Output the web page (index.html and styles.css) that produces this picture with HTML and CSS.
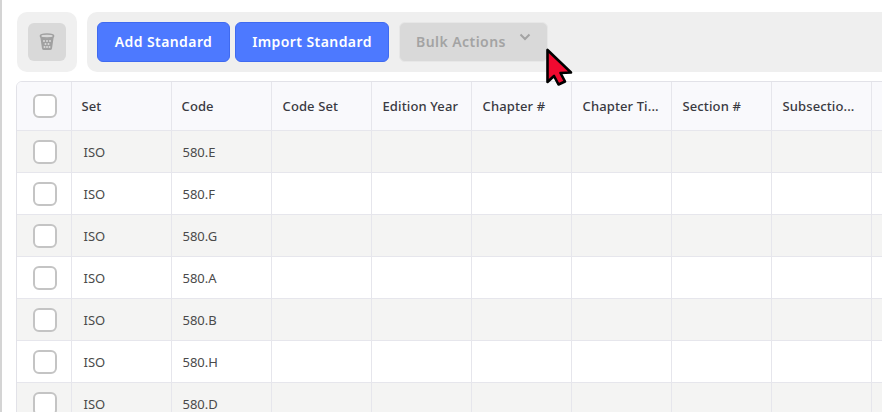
FILE: index.html
```html
<!DOCTYPE html>
<html lang="en">
<head>
<meta charset="utf-8">
<title>Standards</title>
<link rel="stylesheet" href="styles.css">
</head>
<body>
<div class="page">
  <div class="toolbar">
    <div class="trash-box">
      <button class="trash-btn" aria-label="Delete">
        <svg width="16" height="18" viewBox="0 0 16 18">
          <ellipse cx="8" cy="3" rx="6.6" ry="2" fill="none" stroke="#a0a0a0" stroke-width="1.6"/>
          <path d="M1.3 4 L3 15.5 Q3.3 17 5 17 H11 Q12.7 17 13 15.5 L14.7 4 Q8 6.5 1.3 4Z" fill="#a0a0a0"/>
          <g fill="#d8d8d8">
            <circle cx="5" cy="8" r="1"/><circle cx="8" cy="8" r="1"/><circle cx="11" cy="8" r="1"/>
            <circle cx="6.5" cy="11" r="1"/><circle cx="9.5" cy="11" r="1"/>
            <circle cx="5.5" cy="14" r="1"/><circle cx="8" cy="14" r="1"/><circle cx="10.5" cy="14" r="1"/>
          </g>
        </svg>
      </button>
    </div>
    <div class="actions">
      <button class="btn btn-primary btn-add">Add Standard</button>
      <button class="btn btn-primary btn-import">Import Standard</button>
      <button class="btn btn-bulk">Bulk Actions
        <svg class="chev" width="12" height="8" viewBox="0 0 12 8"><path d="M1.5 1.5 L6 6 L10.5 1.5" fill="none" stroke="#a3a3a3" stroke-width="2"/></svg>
      </button>
    </div>
  </div>
  <div class="table-wrap">
    <table>
      <thead>
        <tr>
          <th class="c-check"><span class="check"></span></th>
          <th>Set</th><th>Code</th><th>Code Set</th><th>Edition Year</th><th>Chapter #</th><th>Chapter Ti...</th><th>Section #</th><th>Subsectio...</th><th></th>
        </tr>
      </thead>
      <tbody>
        <tr><td class="c-check"><span class="check"></span></td><td>ISO</td><td>580.E</td><td></td><td></td><td></td><td></td><td></td><td></td><td></td></tr>
        <tr><td class="c-check"><span class="check"></span></td><td>ISO</td><td>580.F</td><td></td><td></td><td></td><td></td><td></td><td></td><td></td></tr>
        <tr><td class="c-check"><span class="check"></span></td><td>ISO</td><td>580.G</td><td></td><td></td><td></td><td></td><td></td><td></td><td></td></tr>
        <tr><td class="c-check"><span class="check"></span></td><td>ISO</td><td>580.A</td><td></td><td></td><td></td><td></td><td></td><td></td><td></td></tr>
        <tr><td class="c-check"><span class="check"></span></td><td>ISO</td><td>580.B</td><td></td><td></td><td></td><td></td><td></td><td></td><td></td></tr>
        <tr><td class="c-check"><span class="check"></span></td><td>ISO</td><td>580.H</td><td></td><td></td><td></td><td></td><td></td><td></td><td></td></tr>
        <tr><td class="c-check"><span class="check"></span></td><td>ISO</td><td>580.D</td><td></td><td></td><td></td><td></td><td></td><td></td><td></td></tr>
      </tbody>
    </table>
  </div>
  <svg class="cursor" width="32" height="42" viewBox="0 0 32 42">
    <path d="M4.5 3 L4.5 35 L11 29 L15.5 37.5 L22 34.5 L17.5 26 L28 25.5 Z" fill="#f00a30" stroke="#000" stroke-width="2.6" stroke-linejoin="round"/>
  </svg>
</div>
</body>
</html>
```
FILE: styles.css
```css
* { box-sizing: border-box; }
html, body { margin: 0; padding: 0; height: 100%; overflow: hidden; background: #fff; }
body { font-family: "Noto Sans", sans-serif; color: #3f3f46; }
.page {
  position: relative;
  height: 412px;
  width: 882px;
  overflow: hidden;
  border-left: 2px solid #d4d4d4;
  padding: 12px 0 0 14px;
}
.toolbar { display: flex; gap: 10px; height: 60px; width: 900px; margin-left: 1px; }
.trash-box {
  width: 60px; height: 60px; padding: 11px;
  background: #f0f0f0; border-radius: 10px;
}
.trash-btn {
  width: 38px; height: 38px; padding: 0; border: 0;
  background: #d9d9d9; border-radius: 6px;
  display: flex; align-items: center; justify-content: center;
}
.actions {
  flex: 1; display: flex; gap: 5px; padding: 10px;
  background: #efefef; border-radius: 10px;
}
.btn {
  height: 40px; padding: 0 0 2px; border-radius: 6px;
  font: 600 14px "Noto Sans", sans-serif; letter-spacing: .42px;
}
.btn-primary { background: #4d79ff; border: 1px solid #3f6af0; color: #fff; }
.btn-add { width: 133px; }
.btn-import { width: 154px; }
.btn-bulk {
  width: 149px; margin-left: 5px; padding: 0 16px 2px 16px;
  background: #d9d9d9; border: 1px solid #e7e7e7; color: #a3a3a3;
  display: flex; align-items: center; justify-content: space-between;
  letter-spacing: .45px;
}
.chev { margin: 0 0 8px; }
.table-wrap {
  margin-top: 9px; width: 900px;
  border: 1px solid #e2e2e8; border-radius: 6px 0 0 0; overflow: hidden;
}
table { border-collapse: collapse; table-layout: fixed; width: 900px; font-size: 13px; }
th, td {
  width: 100px; padding: 0 10px; text-align: left;
  border-right: 1px solid #e6e6ec; border-bottom: 1px solid #e6e6ec;
  white-space: nowrap;
}
th { height: 48px; background: #f9f9fc; font-weight: 500; color: #3a3a42; letter-spacing: .12px; }
th:nth-child(n+4) { padding-left: 11px; }
td { height: 42px; color: #4a4a4a; padding: 2px 11px 0; }
td:nth-child(2) { padding-left: 12px; }
th.c-check, td.c-check { width: 54px; padding: 0 0 0 16px; }
td.c-check { padding-top: 2px; }
th:last-child, td:last-child { width: 46px; }
tbody tr:nth-child(odd) td { background: #f4f4f3; }
.check {
  display: block; width: 24px; height: 24px;
  background: #fff; border: 2px solid #c4c4c4; border-radius: 6px;
}
.cursor { position: absolute; left: 541px; top: 47px; }
```
